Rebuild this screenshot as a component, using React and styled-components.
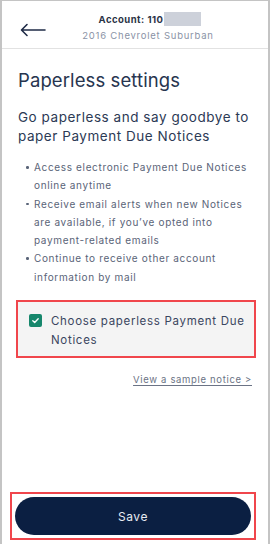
import React from "react";
import styled, { createGlobalStyle } from "styled-components";

const Global = createGlobalStyle`
  html, body { margin: 0; padding: 0; background: #fff; }
  body { font-family: "Inter", "Open Sans", sans-serif; }
  * { box-sizing: border-box; }
`;

const Frame = styled.div`
  width: 270px;
  height: 544px;
  border-left: 2px solid #c4c4c4;
  border-right: 2px solid #c4c4c4;
  border-top: 1px solid #c4c4c4;
  display: flex;
  flex-direction: column;
  color: #25324f;
`;

const Header = styled.header`
  height: 48px;
  display: grid;
  grid-template-columns: 56px 1fr 30px;
  align-items: center;
  border-bottom: 1px solid #e2e2e2;
`;

const BackButton = styled.button`
  border: 0;
  background: none;
  padding: 0 0 0 18px;
  margin-top: 10px;
  display: flex;
  align-items: center;
  color: #1f2b47;
`;

const HeaderText = styled.div`
  display: flex;
  flex-direction: column;
  align-items: center;
  gap: 4px;
  padding-top: 4px;
`;

const AccountLine = styled.div`
  display: flex;
  align-items: center;
  font-size: 9.5px;
  font-weight: 700;
  letter-spacing: 0.05em;
  color: #2b3346;
  margin-left: 4px;
`;

const Redacted = styled.span`
  display: inline-block;
  width: 37px;
  height: 14px;
  background: #cdd1da;
  margin-left: 1px;
`;

const Vehicle = styled.div`
  font-size: 9.5px;
  letter-spacing: 0.08em;
  color: #8a93a6;
`;

const Body = styled.main`
  flex: 1;
  padding: 20px 14px 0 16px;
  display: flex;
  flex-direction: column;
`;

const Title = styled.h1`
  margin: 0;
  font-size: 18.5px;
  font-weight: 400;
  color: #27354f;
  letter-spacing: 0.1px;
`;

const Lead = styled.p`
  margin: 17px 0 0;
  font-size: 13.5px;
  line-height: 19px;
  letter-spacing: 0.04em;
  color: #2c3a55;
`;

const Bullets = styled.ul`
  margin: 12px 0 0;
  padding: 0 0 0 16px;
  list-style: none;
`;

const Bullet = styled.li`
  position: relative;
  font-size: 10px;
  line-height: 18.3px;
  letter-spacing: 0.065em;
  color: #5a6478;
  &::before {
    content: "";
    position: absolute;
    left: -8px;
    top: 8px;
    width: 2.5px;
    height: 2.5px;
    border-radius: 50%;
    background: #5a6478;
  }
`;

const Highlight = styled.div`
  border: 2px solid #f0464c;
  margin: ${(p) => p.$margin || "0"};
`;

const OptIn = styled.label`
  display: flex;
  align-items: flex-start;
  gap: 9px;
  background: #f4f4f4;
  padding: 10px 8px 6px 11px;
  font-size: 11.5px;
  line-height: 19px;
  letter-spacing: 0.06em;
  color: #3b4660;
`;

const Check = styled.span`
  flex: none;
  width: 13px;
  height: 13px;
  margin-top: 2px;
  border-radius: 2px;
  background: #17876c;
  display: flex;
  align-items: center;
  justify-content: center;
`;

const SampleLink = styled.a`
  align-self: flex-end;
  margin: 16px 2px 0 0;
  font-size: 9.5px;
  letter-spacing: 0.07em;
  color: #6b7385;
  text-decoration: underline;
  text-underline-offset: 2px;
`;

const Footer = styled.div`
  padding: 0 12px 4px 8px;
`;

const SaveFrame = styled.div`
  padding: 3px;
`;

const SaveButton = styled.button`
  width: 100%;
  height: 38px;
  border: 0;
  border-radius: 19px;
  background: #0b1f42;
  color: #e8ebf2;
  font-family: inherit;
  font-size: 12px;
  letter-spacing: 0.05em;
  display: block;
`;

export default function App() {
  return (
    <>
      <Global />
      <Frame>
        <Header>
          <BackButton aria-label="Back">
            <svg width="26" height="14" viewBox="0 0 26 14" fill="none">
              <path d="M25 7H2M7 1.5L1.5 7L7 12.5" stroke="#1f2b47" strokeWidth="1.6" strokeLinecap="round" strokeLinejoin="round" />
            </svg>
          </BackButton>
          <HeaderText>
            <AccountLine>
              Account: 110
              <Redacted />
            </AccountLine>
            <Vehicle>2016 Chevrolet Suburban</Vehicle>
          </HeaderText>
          <span />
        </Header>
        <Body>
          <Title>Paperless settings</Title>
          <Lead>Go paperless and say goodbye to paper Payment Due Notices</Lead>
          <Bullets>
            <Bullet>Access electronic Payment Due Notices online anytime</Bullet>
            <Bullet>Receive email alerts when new Notices are available, if you’ve opted into payment-related emails</Bullet>
            <Bullet>Continue to receive other account information by mail</Bullet>
          </Bullets>
          <Highlight $margin="14px -2px 0 -2px">
            <OptIn>
              <Check>
                <svg width="9" height="9" viewBox="0 0 10 10" fill="none">
                  <path d="M2 5.2L4.1 7.2L8 3" stroke="#fff" strokeWidth="1.5" strokeLinecap="round" strokeLinejoin="round" />
                </svg>
              </Check>
              <span>Choose paperless Payment Due Notices</span>
            </OptIn>
          </Highlight>
          <SampleLink href="#">View a sample notice &gt;</SampleLink>
        </Body>
        <Footer>
          <Highlight>
            <SaveFrame>
              <SaveButton>Save</SaveButton>
            </SaveFrame>
          </Highlight>
        </Footer>
      </Frame>
    </>
  );
}
